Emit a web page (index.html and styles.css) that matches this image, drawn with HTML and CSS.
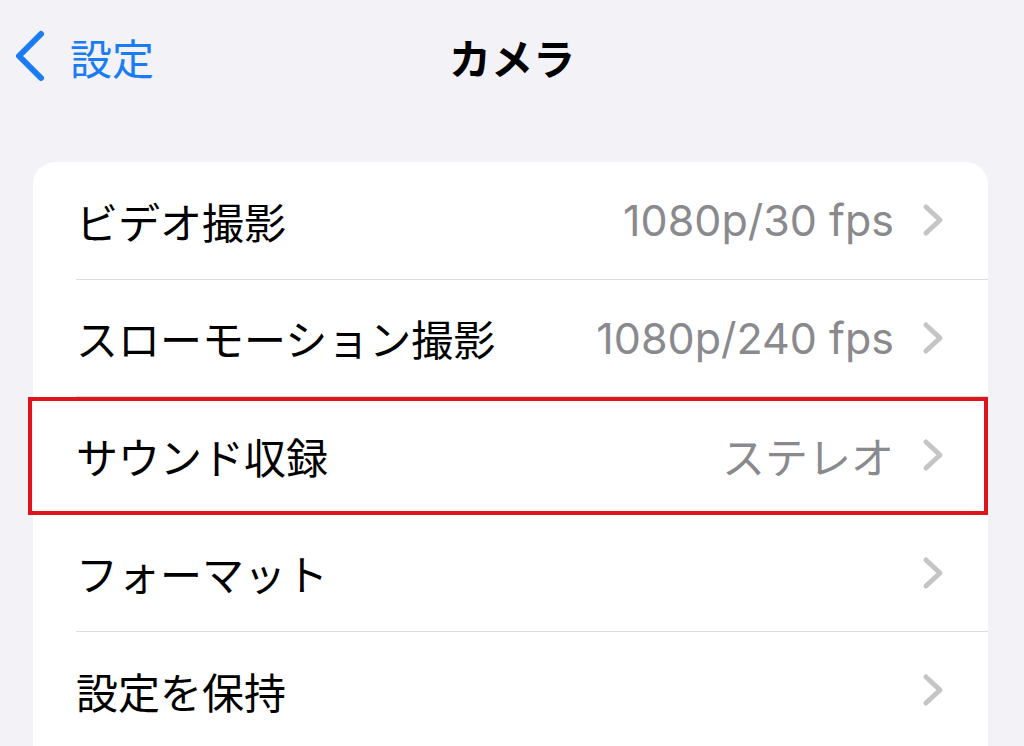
FILE: index.html
```html
<!DOCTYPE html>
<html lang="ja">
<head>
    <meta charset="UTF-8">
    <meta name="viewport" content="width=device-width, initial-scale=1.0">
    <title>カメラ</title>
    <link rel="stylesheet" href="styles.css">
</head>
<body>
    <header class="navbar">
        <a class="back" href="#">
            <svg class="back-icon" width="32" height="52" viewBox="0 0 32 52">
                <polyline points="27,4 5,26 27,48" fill="none" stroke="#1a7cf5" stroke-width="6" stroke-linecap="round" stroke-linejoin="round"/>
            </svg>
            <span>設定</span>
        </a>
        <h1 class="title">カメラ</h1>
        <div></div>
    </header>

    <main class="content">
        <ul class="group">
            <li class="row">
                <div class="row-inner">
                    <span class="label">ビデオ撮影</span>
                    <span class="value">1080p/30 fps</span>
                    <svg class="chevron" width="22" height="34" viewBox="0 0 22 34"><polyline points="4,4 18,17 4,30"/></svg>
                </div>
            </li>
            <li class="row">
                <div class="row-inner">
                    <span class="label">スローモーション撮影</span>
                    <span class="value">1080p/240 fps</span>
                    <svg class="chevron" width="22" height="34" viewBox="0 0 22 34"><polyline points="4,4 18,17 4,30"/></svg>
                </div>
            </li>
            <li class="row highlighted">
                <div class="row-inner">
                    <span class="label">サウンド収録</span>
                    <span class="value">ステレオ</span>
                    <svg class="chevron" width="22" height="34" viewBox="0 0 22 34"><polyline points="4,4 18,17 4,30"/></svg>
                </div>
            </li>
            <li class="row">
                <div class="row-inner">
                    <span class="label">フォーマット</span>
                    <span class="value"></span>
                    <svg class="chevron" width="22" height="34" viewBox="0 0 22 34"><polyline points="4,4 18,17 4,30"/></svg>
                </div>
            </li>
            <li class="row">
                <div class="row-inner">
                    <span class="label">設定を保持</span>
                    <span class="value"></span>
                    <svg class="chevron" width="22" height="34" viewBox="0 0 22 34"><polyline points="4,4 18,17 4,30"/></svg>
                </div>
            </li>
        </ul>
    </main>
</body>
</html>
```

FILE: styles.css
```css
body {
    margin: 0;
    background: #f2f2f7;
    font-family: "Inter", "Noto Sans CJK JP", sans-serif;
    color: #000;
    overflow: hidden;
}

.navbar {
    display: grid;
    grid-template-columns: 1fr auto 1fr;
    align-items: center;
    height: 112px;
}

.back {
    display: flex;
    align-items: center;
    gap: 24px;
    padding-left: 14px;
    color: #1a7cf5;
    text-decoration: none;
    font-size: 42px;
}

.back-icon {
    display: block;
}

.title {
    margin: 0;
    font-size: 42px;
    font-weight: bold;
}

.content {
    padding: 50px 36px 0 33px;
}

.group {
    list-style: none;
    margin: 0;
    padding: 0;
    background: #fff;
    border-radius: 22px 22px 0 0;
}

.row {
    position: relative;
    padding-left: 43px;
}

.row-inner {
    display: flex;
    align-items: center;
    height: 117.5px;
    box-sizing: border-box;
    padding-right: 44px;
    border-bottom: 1.5px solid #dcdce0;
}

.label {
    flex: 1;
    font-size: 42px;
    white-space: nowrap;
}

.value {
    font-size: 43px;
    color: #8a8a8e;
    margin-right: 28px;
    white-space: nowrap;
}

.chevron {
    display: block;
    fill: none;
    stroke: #c5c5c8;
    stroke-width: 5;
    stroke-linecap: round;
    stroke-linejoin: round;
}

/* red frame drawn over the sound recording row */
.highlighted::after {
    content: "";
    position: absolute;
    top: 0;
    bottom: 0;
    left: -5px;
    right: 0;
    border: 4px solid #e0141e;
}
```
